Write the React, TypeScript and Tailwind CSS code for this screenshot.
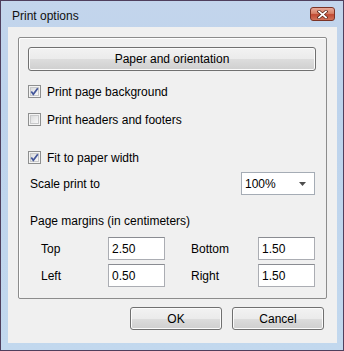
import React from 'react';

const btn =
  'flex items-center justify-center rounded-[3px] border border-[#707070] bg-[linear-gradient(to_bottom,#f2f2f2_0%,#ebebeb_50%,#dddddd_50%,#cfcfcf_100%)] shadow-[inset_0_0_0_1px_#fbfbfb]';

function CheckBox({ checked }: { checked?: boolean }) {
  return (
    <svg width="13" height="13" viewBox="0 0 13 13" className="shrink-0">
      <defs>
        <linearGradient id="cbg" x1="0" y1="0" x2="1" y2="1">
          <stop offset="0" stopColor="#d9dadb" />
          <stop offset="1" stopColor="#fafafa" />
        </linearGradient>
      </defs>
      <rect x="0.5" y="0.5" width="12" height="12" fill="#f4f4f4" stroke="#8e8f8f" />
      <rect x="2.5" y="2.5" width="8" height="8" fill="url(#cbg)" stroke="#c8c9ca" />
      {checked && (
        <path d="M3.3 6.4 L5.3 9.2 L9.8 3.2" fill="none" stroke="#43569a" strokeWidth="1.7" />
      )}
    </svg>
  );
}

function CheckRow({ checked, label }: { checked?: boolean; label: string }) {
  return (
    <div className="flex items-center h-[13px] ml-[9px]">
      <CheckBox checked={checked} />
      <span className="ml-[6px] leading-none">{label}</span>
    </div>
  );
}

function Field({ value }: { value: string }) {
  return (
    <div className="w-[57px] h-[23px] flex items-center pl-[3px] bg-white border border-[#abadb3] border-t-[#8a8c92]">
      {value}
    </div>
  );
}

export default function App() {
  return (
    <div className="w-[344px] h-[351px] font-['Liberation_Sans',Arial,sans-serif] text-[12px] text-black">
      <div className="w-full h-full flex flex-col border border-[#4f3f5d] bg-[linear-gradient(to_bottom,#c3d5ec,#bdd3ec_30%,#c2d8ee)]">
        {/* title bar */}
        <div className="h-[26px] flex items-center justify-between pl-[11px] pr-[8px] pt-[3px] shrink-0">
          <span className="text-[12px] text-[#101010]">Print options</span>
          <div className="w-[25px] h-[14px] -mt-[3px] rounded-[3px] border border-[#7b3326] bg-[linear-gradient(to_bottom,#e8a999_0%,#d88268_45%,#c24a33_55%,#d0735a_100%)] flex items-center justify-center">
            <svg width="11" height="9" viewBox="0 0 11 9">
              <path d="M2 1.5 L9 7.5 M9 1.5 L2 7.5" stroke="#5a2418" strokeWidth="3.2" strokeLinecap="square" />
              <path d="M2 1.5 L9 7.5 M9 1.5 L2 7.5" stroke="#ffffff" strokeWidth="1.7" strokeLinecap="square" />
            </svg>
          </div>
        </div>

        {/* client area */}
        <div className="flex-1 ml-[7px] mr-[6px] mb-[7px] bg-[#f0f0f0] flex flex-col pt-[10px]">
          <div className="ml-[10px] w-[309px] h-[262px] border border-[#8c8c8c] rounded-[2px] shadow-[inset_1px_1px_0_#ffffff] flex flex-col">
            <div className={`${btn} mt-[9px] ml-[9px] w-[288px] h-[24px]`}>Paper and orientation</div>

            <div className="mt-[14px]">
              <CheckRow checked label="Print page background" />
            </div>
            <div className="mt-[15px]">
              <CheckRow label="Print headers and footers" />
            </div>
            <div className="mt-[25px]">
              <CheckRow checked label="Fit to paper width" />
            </div>

            <div className="mt-[8px] flex items-center justify-between pl-[11px] pr-[11px]">
              <span>Scale print to</span>
              <div className="w-[74px] h-[23px] flex items-center justify-between pl-[3px] pr-[8px] bg-white border border-[#a5acb5]">
                <span>100%</span>
                <svg width="7" height="4" viewBox="0 0 7 4">
                  <path d="M0 0 H7 L3.5 4 Z" fill="#4d4d4d" />
                </svg>
              </div>
            </div>

            <div className="mt-[18px] pl-[11px] h-[16px] flex items-center">Page margins (in centimeters)</div>

            <div className="mt-[8px] grid grid-cols-[67px_57px_26px_67px_57px] items-center gap-y-[4px] pl-[22px]">
              <span>Top</span>
              <Field value="2.50" />
              <span />
              <span>Bottom</span>
              <Field value="1.50" />
              <span>Left</span>
              <Field value="0.50" />
              <span />
              <span>Right</span>
              <Field value="1.50" />
            </div>
          </div>

          <div className="mt-[8px] flex justify-end gap-[10px] pr-[13px]">
            <div className={`${btn} w-[92px] h-[23px] border-[#3c8aa8] shadow-[inset_0_0_0_1px_#7ddcf2,inset_0_0_0_2px_#d8f3fa]`}>OK</div>
            <div className={`${btn} w-[92px] h-[23px]`}>Cancel</div>
          </div>
        </div>
      </div>
    </div>
  );
}
